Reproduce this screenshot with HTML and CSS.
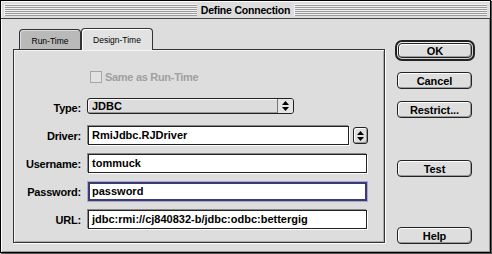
FILE: index.html
```html
<!DOCTYPE html>
<html>
<head>
<meta charset="utf-8">
<title>Define Connection</title>
<link rel="stylesheet" href="styles.css">
</head>
<body>
<div class="window">
  <div class="titlebar">
    <div class="stripes"></div>
    <div class="title">Define Connection</div>
    <div class="stripes"></div>
  </div>
  <div class="content">
    <div class="tabarea">
      <div class="tabs">
        <div class="tab run">Run-Time</div>
        <div class="tab active">Design-Time</div>
      </div>
      <div class="panel">
        <div class="checkrow">
          <span class="checkbox"></span>
          <span class="checklabel">Same as Run-Time</span>
        </div>
        <div class="form">
          <div class="label">Type:</div>
          <div class="popup">
            <span class="popup-text">JDBC</span>
            <span class="popup-arrows">
              <svg width="7" height="10" viewBox="0 0 7 10"><polygon points="3.5,0 7,4 0,4" fill="#000"/><polygon points="0,6 7,6 3.5,10" fill="#000"/></svg>
            </span>
          </div>

          <div class="label">Driver:</div>
          <div class="fieldrow">
            <div class="field driver">RmiJdbc.RJDriver</div>
            <div class="stepper">
              <svg width="7" height="10" viewBox="0 0 7 10"><polygon points="3.5,0 7,4 0,4" fill="#000"/><polygon points="0,6 7,6 3.5,10" fill="#000"/></svg>
            </div>
          </div>

          <div class="label">Username:</div>
          <div class="field">tommuck</div>

          <div class="label">Password:</div>
          <div class="field focused">password</div>

          <div class="label">URL:</div>
          <div class="field">jdbc:rmi://cj840832-b/jdbc:odbc:bettergig</div>
        </div>
      </div>
    </div>
    <div class="buttons">
      <div class="default-ring"><div class="btn">OK</div></div>
      <div class="btn cancel">Cancel</div>
      <div class="btn restrict">Restrict...</div>
      <div class="btn test">Test</div>
      <div class="btn help">Help</div>
    </div>
  </div>
</div>
</body>
</html>
```

FILE: styles.css
```css
* { box-sizing: border-box; }

html, body {
  margin: 0;
  padding: 0;
  background: #dddddd;
}

body {
  width: 492px;
  height: 254px;
  overflow: hidden;
  font-family: "Liberation Sans", Arial, sans-serif;
  font-weight: bold;
  font-size: 11px;
  color: #000;
}

.window {
  width: 491px;
  height: 253px;
  border: 1px solid #000;
  background: #dddddd;
  box-shadow: inset 1px 1px 0 #ffffff, inset -1px -1px 0 #999999, 1px 1px 0 #555;
  display: flex;
  flex-direction: column;
}

.titlebar {
  height: 18px;
  display: flex;
  align-items: stretch;
  padding: 2px 3px 2px 3px;
  border-bottom: 1px solid #444;
  background: #dddddd;
  box-shadow: inset 1px 1px 0 #fff;
}

.stripes {
  flex: 1;
  margin-top: 1px;
  background: repeating-linear-gradient(to bottom, #f2f2f2 0, #f2f2f2 1px, #9a9a9a 1px, #9a9a9a 2px);
  border-left: 1px solid #f2f2f2;
}

.title {
  padding: 0 4px;
  font-size: 10.5px;
  line-height: 14px;
  letter-spacing: -0.2px;
  white-space: nowrap;
}

.content {
  flex: 1;
  display: flex;
  padding: 9px 0 0 12px;
}

.tabarea {
  width: 372px;
  display: flex;
  flex-direction: column;
}

.tabs {
  display: flex;
  align-items: flex-start;
  height: 22px;
  margin-left: 6px;
  margin-bottom: -1px;
  position: relative;
  z-index: 1;
}

.tab {
  border: 1px solid #333;
  border-bottom: none;
  border-radius: 4px 4px 0 0;
  font-family: "Liberation Sans", Arial, sans-serif;
  font-weight: normal;
  font-size: 8.5px;
  display: flex;
  align-items: center;
  justify-content: center;
}

.tab.run {
  width: 62px;
  height: 20px;
  margin-top: 1px;
  background: #b9b9b9;
  box-shadow: inset 1px 1px 0 #dcdcdc;
  padding-top: 2px;
}

.tab.active {
  width: 72px;
  height: 22px;
  background: #e2e2e2;
  box-shadow: inset 1px 1px 0 #fff;
  padding-top: 1px;
}

.panel {
  height: 194px;
  border: 1px solid #333;
  background: #dddddd;
  box-shadow: inset 1px 1px 0 #f4f4f4, inset -1px -1px 0 #aaaaaa, 1px 1px 0 #fff;
}

.checkrow {
  display: flex;
  align-items: center;
  margin-top: 21px;
  padding-left: 76px;
  height: 12px;
  color: #a0a0a0;
}

.checkbox {
  width: 12px;
  height: 12px;
  border: 1px solid #a8a8a8;
  background: #e2e2e2;
  margin-right: 3px;
}

.checklabel {
  letter-spacing: -0.3px;
}

.form {
  margin-top: 15px;
  display: grid;
  grid-template-columns: 67px 1fr;
  column-gap: 7px;
  row-gap: 9px;
  align-items: center;
}

.label {
  text-align: right;
  letter-spacing: -0.2px;
}

.popup {
  width: 207px;
  height: 16px;
  margin-left: -1px;
  margin-bottom: 3px;
  border: 1px solid #222;
  border-radius: 3px;
  background: #dcdcdc;
  box-shadow: inset 1px 1px 0 #fafafa, inset -1px -1px 0 #999;
  display: flex;
  align-items: stretch;
}

.popup-text {
  flex: 1;
  padding-left: 4px;
  line-height: 14px;
}

.popup-arrows {
  width: 16px;
  border-left: 1px solid #777;
  display: flex;
  align-items: center;
  justify-content: center;
  background: #e4e4e4;
  border-radius: 0 2px 2px 0;
}

.fieldrow {
  display: flex;
  align-items: center;
  gap: 4px;
}

.field {
  width: 279px;
  height: 19px;
  border: 1px solid #222;
  background: #fff;
  box-shadow: -1px -1px 0 #888, 1px 1px 0 #fff;
  padding-left: 3px;
  line-height: 17px;
  white-space: nowrap;
  overflow: hidden;
}

.field.driver {
  width: 261px;
}

.field.focused {
  border: 2px solid #3b3b72;
  box-shadow: 0 0 0 1px #a8a8d0;
  padding-left: 2px;
  line-height: 15px;
}

.stepper {
  width: 15px;
  height: 17px;
  border: 1px solid #222;
  border-radius: 3px;
  background: #e0e0e0;
  box-shadow: inset 1px 1px 0 #fff, inset -1px -1px 0 #999;
  display: flex;
  align-items: center;
  justify-content: center;
}

.buttons {
  margin-left: 12px;
  padding-top: 12px;
  display: flex;
  flex-direction: column;
  width: 80px;
}

.btn {
  width: 75px;
  height: 17px;
  border: 1px solid #222;
  border-radius: 4px;
  background: #dedede;
  box-shadow: inset 1px 1px 0 #fff, inset -1px -1px 0 #9a9a9a;
  display: flex;
  align-items: center;
  justify-content: center;
  letter-spacing: -0.1px;
}

.default-ring {
  width: 80px;
  height: 21px;
  margin-left: -2px;
  border: 2px solid #222;
  border-radius: 7px;
  padding: 1px 0 0 1px;
  background: #d0d0d0;
  box-shadow: inset 1px 1px 0 #f0f0f0;
}

.default-ring .btn {
  width: 74px;
  height: 15px;
}

.cancel { margin-top: 11px; }
.restrict { margin-top: 12px; }
.test { margin-top: 42px; }
.help { margin-top: 50px; }
```
